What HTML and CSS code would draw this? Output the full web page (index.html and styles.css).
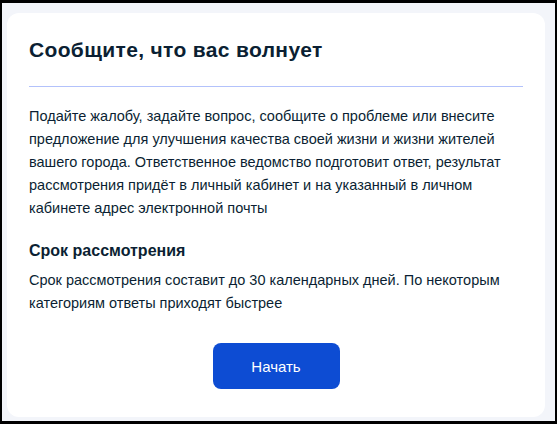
FILE: index.html
```html
<!DOCTYPE html>
<html lang="ru">
<head>
<meta charset="utf-8">
<link rel="stylesheet" href="styles.css">
</head>
<body>
<div class="frame">
  <div class="card">
    <h1 class="title">Сообщите, что вас волнует</h1>
    <hr class="divider">
    <p class="text text-main">Подайте жалобу, задайте вопрос, сообщите о проблеме или внесите предложение для улучшения качества своей жизни и жизни жителей вашего города. Ответственное ведомство подготовит ответ, результат рассмотрения придёт в личный кабинет и на указанный в личном кабинете адрес электронной почты</p>
    <h2 class="subtitle">Срок рассмотрения</h2>
    <p class="text text-short">Срок рассмотрения составит до 30 календарных дней. По некоторым категориям ответы приходят быстрее</p>
    <div class="actions">
      <button class="btn" type="button">Начать</button>
    </div>
  </div>
</div>
</body>
</html>
```
FILE: styles.css
```css
html, body {
  margin: 0;
  padding: 0;
  height: 100%;
}
body {
  background: #000;
  font-family: "Liberation Sans", Arial, sans-serif;
  color: #0b1f33;
}
.frame {
  box-sizing: border-box;
  height: 100vh;
  border-style: solid;
  border-color: #000;
  border-width: 3px 2px 3px 2px;
  background: #f3f5fa;
  padding: 10px 10px 4px 5px;
  display: flex;
  flex-direction: column;
}
.card {
  flex: 1;
  background: #fff;
  border-radius: 12px;
  padding: 23px 22px 28px 22px;
  display: flex;
  flex-direction: column;
}
.title {
  margin: 0;
  font-size: 21px;
  line-height: 28px;
  letter-spacing: 0.35px;
  font-weight: 700;
}
.divider {
  margin: 22px 0 0 0;
  border: 0;
  height: 1px;
  background: #b3c2fb;
}
.text {
  margin: 0;
  font-size: 14.5px;
  line-height: 23px;
}
.text-main {
  margin-top: 18px;
}
.subtitle {
  margin: 19px 0 0 0;
  font-size: 16px;
  line-height: 24px;
  font-weight: 700;
}
.text-short {
  margin-top: 6px;
}
.actions {
  display: flex;
  justify-content: center;
  margin-top: 28px;
}
.btn {
  width: 127px;
  height: 46px;
  border: 0;
  border-radius: 8px;
  background: #0d4cd3;
  color: #fff;
  font-family: "Liberation Sans", Arial, sans-serif;
  font-size: 15px;
}
```
